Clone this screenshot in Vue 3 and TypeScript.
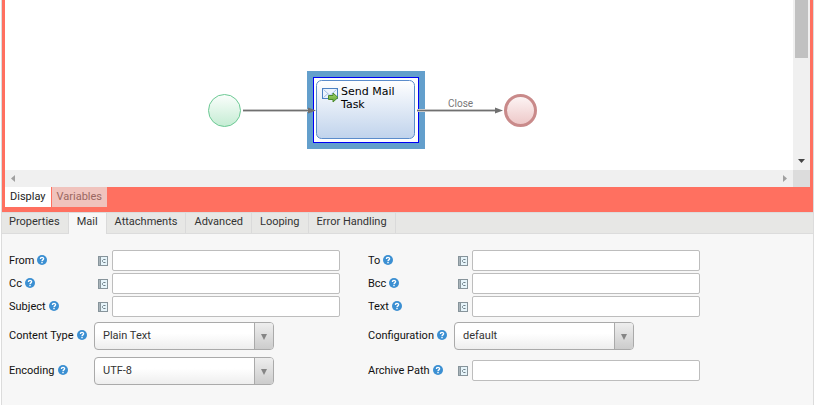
<script setup lang="ts">
import { ref } from 'vue'

interface Field {
  id: string
  label: string
  kind: 'text' | 'select'
  options?: string[]
}

const viewTabs = ['Display', 'Variables']
const activeView = ref('Display')

const panelTabs = ['Properties', 'Mail', 'Attachments', 'Advanced', 'Looping', 'Error Handling']
const activeTab = ref('Mail')

const rows: Field[][] = [
  [{ id: 'from', label: 'From', kind: 'text' }, { id: 'to', label: 'To', kind: 'text' }],
  [{ id: 'cc', label: 'Cc', kind: 'text' }, { id: 'bcc', label: 'Bcc', kind: 'text' }],
  [{ id: 'subject', label: 'Subject', kind: 'text' }, { id: 'text', label: 'Text', kind: 'text' }],
  [
    { id: 'contentType', label: 'Content Type', kind: 'select', options: ['Plain Text', 'HTML'] },
    { id: 'configuration', label: 'Configuration', kind: 'select', options: ['default'] },
  ],
  [
    { id: 'encoding', label: 'Encoding', kind: 'select', options: ['UTF-8', 'ISO-8859-1'] },
    { id: 'archivePath', label: 'Archive Path', kind: 'text' },
  ],
]

const values = ref<Record<string, string>>({
  from: '', to: '', cc: '', bcc: '', subject: '', text: '', archivePath: '',
  contentType: 'Plain Text', configuration: 'default', encoding: 'UTF-8',
})
</script>

<template>
  <div class="editor">
    <section class="designer">
      <div class="viewport">
        <svg class="diagram" height="170">
          <defs>
            <linearGradient id="startFill" x1="0" y1="0" x2="0" y2="1">
              <stop offset="0" stop-color="#fbfefc" />
              <stop offset="1" stop-color="#c4ecd3" />
            </linearGradient>
            <linearGradient id="endFill" x1="0" y1="0" x2="0" y2="1">
              <stop offset="0" stop-color="#fdf6f6" />
              <stop offset="1" stop-color="#edc6c6" />
            </linearGradient>
            <linearGradient id="taskFill" x1="0" y1="0" x2="0" y2="1">
              <stop offset="0" stop-color="#ffffff" />
              <stop offset="1" stop-color="#c0d3ec" />
            </linearGradient>
            <linearGradient id="arrowFill" x1="0" y1="0" x2="0" y2="1">
              <stop offset="0" stop-color="#a5d46a" />
              <stop offset="1" stop-color="#5fa636" />
            </linearGradient>
          </defs>
          <circle cx="219.5" cy="110.5" r="16" fill="url(#startFill)" stroke="#6cc994" />
          <circle cx="515.5" cy="110.5" r="15" fill="url(#endFill)" stroke="#c98a8a" stroke-width="3" />
          <rect x="302" y="71" width="118" height="78" fill="#639fcc" />
          <rect x="308.500" y="77.500" width="105" height="65" fill="#fff" stroke="#0000f5" />
          <rect x="311.500" y="80.500" width="98" height="58" rx="5" fill="url(#taskFill)" stroke="#5b8ccb" />
          <g>
            <rect x="317.500" y="88.500" width="15" height="10" fill="#edf4fd" stroke="#4c81c2" />
            <path d="M318.500 89.500 325 95.500l6.500-6M318.500 97.500l4.500-4M331.500 97.500 327 93.500" fill="none" stroke="#a3bfe5" />
            <path d="M323.500 95.500h4.500v-2.500l5 4.500-5 4.500v-2.500h-4.500z" fill="url(#arrowFill)" stroke="#4a8a2c" />
          </g>
          <text class="task-label" x="336" y="95">Send Mail</text>
          <text class="task-label" x="336" y="108">Task</text>
          <path d="M238 110.500h66M412 110.500h80" stroke="#c5c5c5" stroke-width="3" />
          <path d="M238 110.500h72M412 110.500h80" stroke="#707070" />
          <path d="M303 107.500 311 110.500 303 113.500zM490 107.500 498 110.500 490 113.500z" fill="#707070" />
          <text class="flow-label" x="443" y="107">Close</text>
        </svg>
        <div class="vscroll">
          <div class="vthumb"></div>
          <svg width="17" height="17" viewBox="0 0 17 17"><path d="M5 6h7L8.500 10z" fill="#454545" /></svg>
        </div>
        <div class="hscroll">
          <svg width="17" height="17" viewBox="0 0 17 17"><path d="M10 5v7L6 8.500z" fill="#a0a0a0" /></svg>
          <svg width="17" height="17" viewBox="0 0 17 17"><path d="M7 5v7l4-3.500z" fill="#a0a0a0" /></svg>
        </div>
        <div class="corner"></div>
      </div>
      <nav class="view-tabs">
        <button
          v-for="t in viewTabs" :key="t" type="button"
          :class="{ active: t === activeView }" @click="activeView = t"
        >{{ t }}</button>
      </nav>
    </section>

    <section class="panel">
      <nav class="panel-tabs">
        <button
          v-for="t in panelTabs" :key="t" type="button"
          :class="{ active: t === activeTab }" @click="activeTab = t"
        >{{ t }}</button>
      </nav>
      <form class="form" @submit.prevent>
        <div v-for="(row, i) in rows" :key="i" class="row" :class="{ tall: row[0].kind === 'select' }">
          <div v-for="f in row" :key="f.id" class="field">
            <div class="caption">
              <label :for="f.id">{{ f.label }}</label>
              <svg class="help" width="10" height="10" viewBox="0 0 10 10">
                <circle cx="5" cy="5" r="5" fill="#3b8fd2" />
                <path d="M3.400 3.900C3.400 1.900 6.600 1.900 6.600 3.800 6.600 4.900 5 4.900 5 6.200M5 7v1.300" fill="none" stroke="#fff" stroke-width="1.400" />
              </svg>
            </div>
            <template v-if="f.kind === 'text'">
              <svg class="const" width="10" height="10" viewBox="0 0 10 10">
                <path d="M0 0h10v10H0z" fill="#87949b" />
                <path d="M3 1h6v8H3z" fill="#e6f4fa" />
                <path d="M1 1h1v8H1z" fill="#a9b4ba" />
                <path d="M7.500 3.500h-2l-1 1v1l1 1h2" fill="none" stroke="#6f8089" />
              </svg>
              <input :id="f.id" v-model="values[f.id]" type="text" />
            </template>
            <div v-else class="combo">
              <select :id="f.id" v-model="values[f.id]">
                <option v-for="o in f.options" :key="o">{{ o }}</option>
              </select>
              <span class="combo-arrow">
                <svg width="6" height="6" viewBox="0 0 6 6"><path d="M0 0h6L3 6z" fill="#858585" /></svg>
              </span>
            </div>
          </div>
        </div>
      </form>
    </section>
  </div>
</template>

<style>
body {
  background: #fff;
}
</style>

<style scoped>
.editor {
  display: flex;
  flex-direction: column;
  box-sizing: border-box;
  min-height: 100vh;
  margin-left: 1px;
  border-left: 1px solid #dcdcdc;
  border-right: 1px solid #dcdcdc;
  font: 11px/14px Roboto, sans-serif;
  color: #111;
}
button {
  margin: 0;
  border: 0;
  font: inherit;
  cursor: pointer;
}
.designer {
  padding: 0 3px 5px;
  background: #ff7060;
}
.viewport {
  display: grid;
  grid-template-columns: 1fr 17px;
  grid-template-rows: 170px 17px;
  background: #fff;
}
.diagram {
  display: block;
  width: 100%;
}
.task-label {
  font: 11px "DejaVu Sans", sans-serif;
  fill: #000;
}
.flow-label {
  font: 10px Roboto, sans-serif;
  fill: #777;
}
.vscroll {
  display: flex;
  flex-direction: column;
  justify-content: space-between;
  background: #f0f0f0;
}
.vthumb {
  height: 58px;
  margin: 0 2px;
  background: #c1c1c1;
}
.hscroll {
  display: flex;
  justify-content: space-between;
  background: #f0f0f0;
}
.corner {
  background: #dcdcdc;
}
.view-tabs {
  display: flex;
  gap: 1px;
}
.view-tabs button {
  height: 20px;
  padding: 0 5px;
  background: #f0c3bd;
  color: #9a6761;
}
.view-tabs button.active {
  background: #fff;
  color: #222;
}
.panel {
  flex: 1;
  background: #f7f7f7;
}
.panel-tabs {
  display: flex;
  height: 20px;
  border-top: 1px solid #dcdcdc;
  border-bottom: 1px solid #dcdcdc;
  background: #e7e7e5;
}
.panel-tabs button {
  padding: 0 8px 2px;
  border-right: 1px solid #dadada;
  background: transparent;
  color: #333;
}
.panel-tabs button:first-child {
  padding-left: 7px;
}
.panel-tabs button.active {
  height: 21px;
  padding-bottom: 3px;
  background: #f7f7f7;
}
.form {
  padding: 15px 7px;
}
.row {
  display: grid;
  grid-template-columns: 359px 360px;
  height: 23px;
}
.row.tall {
  height: 35px;
}
.field {
  display: flex;
  align-items: center;
}
.caption {
  display: flex;
  align-items: center;
  gap: 3px;
  width: 86px;
}
.field:first-child .caption {
  width: 85px;
}
.help {
  margin-bottom: 2px;
}
.const {
  margin: 0 4px;
}
input {
  box-sizing: border-box;
  width: 228px;
  height: 21px;
  padding: 0 4px;
  border: 1px solid #bdbdbd;
  border-radius: 2px;
  background: #fff;
  font: inherit;
}
.combo {
  position: relative;
  width: 180px;
  height: 28px;
}
select {
  appearance: none;
  box-sizing: border-box;
  width: 100%;
  height: 100%;
  padding: 0 28px 0 8px;
  border: 1px solid #aaa;
  border-radius: 4px;
  background: linear-gradient(#fff 40%, #eee);
  font: inherit;
  color: #333;
}
.combo-arrow {
  position: absolute;
  top: 1px;
  right: 1px;
  bottom: 1px;
  display: flex;
  align-items: center;
  justify-content: center;
  width: 18px;
  border-left: 1px solid #aaa;
  border-radius: 0 3px 3px 0;
  background: linear-gradient(#eee, #ccc);
  pointer-events: none;
}
.combo-arrow svg {
  margin: 3px 1px 0 0;
}
</style>
